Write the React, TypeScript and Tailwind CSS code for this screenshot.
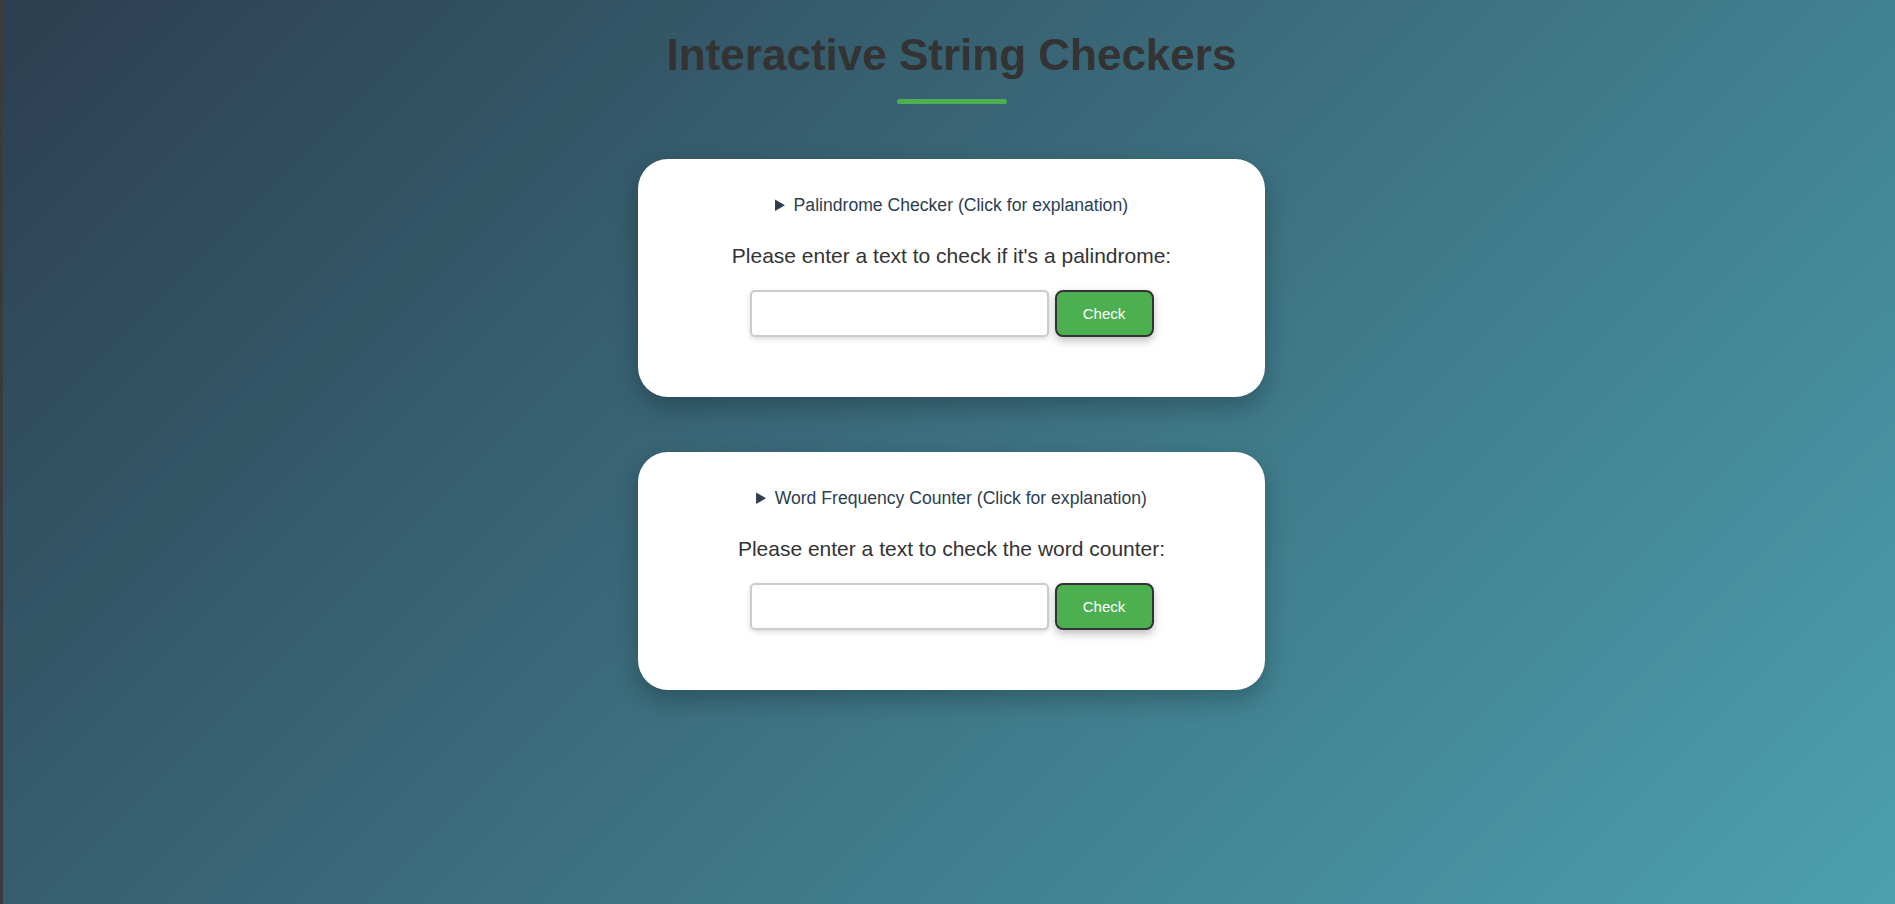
import React, { useState } from 'react';

// Two cards, one per checker. Each has a collapsible explanation, a prompt and an input row.

interface CheckerCardProps {
  title: string;
  prompt: string;
  explanation: string;
}

function CheckerCard({ title, prompt, explanation }: CheckerCardProps): React.JSX.Element {
  const [text, setText] = useState('');

  return (
    <section className="w-[627px] h-[238px] rounded-[30px] bg-white pt-[36px] shadow-[0_10px_25px_rgba(0,0,0,0.25)] flex flex-col items-center">
      <details className="text-center">
        <summary className="cursor-pointer text-[17.6px] leading-[20px] text-[#2c3e50]">{title}</summary>
        <p className="mt-2 text-sm text-[#555]">{explanation}</p>
      </details>

      <p className="mt-[29px] text-[21px] leading-[24px] text-[#333]">{prompt}</p>

      <div className="mt-[22px] flex gap-[6px]">
        <input
          type="text"
          value={text}
          onChange={(e) => setText(e.target.value)}
          className="w-[299px] h-[47px] rounded-[5px] border-2 border-[#cccccc] bg-white px-3 text-base outline-none shadow-[0_2px_5px_rgba(0,0,0,0.15)]"
        />
        <button
          type="button"
          className="w-[99px] h-[47px] pt-[1px] rounded-[8px] border-2 border-[#333333] bg-[#4caf50] text-[15px] text-white shadow-[0_4px_8px_rgba(0,0,0,0.25)]"
        >
          Check
        </button>
      </div>
    </section>
  );
}

export default function App(): React.JSX.Element {
  return (
    <div
      className="min-h-[904px] border-l-[3px] border-[#3b3b3b] pl-[5px] bg-[linear-gradient(135deg,#2c3e50,#4ca1af)] flex flex-col items-center"
      style={{ fontFamily: '"Liberation Sans", Arial, sans-serif' }}
    >
      <h1 className="mt-[30px] text-[44px] leading-[50px] font-bold text-[#333333]">
        Interactive String Checkers
      </h1>
      <div className="mt-[19px] w-[110px] h-[5px] rounded-full bg-[#4caf50]" />

      <div className="mt-[55px] flex flex-col gap-[55px]">
        <CheckerCard
          title="Palindrome Checker (Click for explanation)"
          prompt="Please enter a text to check if it's a palindrome:"
          explanation="A palindrome reads the same forwards and backwards."
        />
        <CheckerCard
          title="Word Frequency Counter (Click for explanation)"
          prompt="Please enter a text to check the word counter:"
          explanation="Counts how many times each word appears in the text."
        />
      </div>
    </div>
  );
}
